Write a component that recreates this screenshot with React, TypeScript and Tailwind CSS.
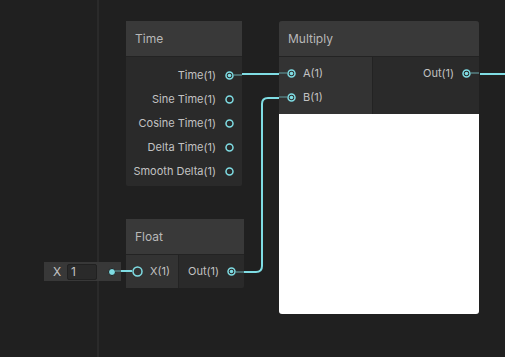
import React from "react";

const font = { fontFamily: "Inter, 'Noto Sans', sans-serif" };

function Port({ filled, big }: { filled?: boolean; big?: boolean }) {
  const s = big ? 11 : 9;
  return (
    <svg width={s} height={s} viewBox={`0 0 ${s} ${s}`} className="shrink-0">
      <circle cx={s / 2} cy={s / 2} r={s / 2 - 1} fill="none" stroke="#7fdde4" strokeWidth="1.5" />
      {filled && <circle cx={s / 2} cy={s / 2} r={1.8} fill="#7fdde4" />}
    </svg>
  );
}

export default function App() {
  const timeOuts = ["Time(1)", "Sine Time(1)", "Cosine Time(1)", "Delta Time(1)", "Smooth Delta(1)"];
  return (
    <div className="relative w-[505px] h-[357px] bg-[#202020] overflow-hidden text-[11px]" style={font}>
      {/* vertical guide line */}
      <div className="absolute left-[97px] top-0 w-[2px] h-full bg-[#2a2a2a]" />

      {/* wires */}
      <svg className="absolute left-0 top-0" width="505" height="357">
        <path d="M242 74 H279" stroke="#7fdde4" strokeWidth="2" fill="none" />
        <path d="M244 272 H256 Q262 272 262 266 V104 Q262 98 268 98 H279" stroke="#7fdde4" strokeWidth="2" fill="none" />
        <path d="M480 74 H505" stroke="#7fdde4" strokeWidth="2" fill="none" />
      </svg>

      {/* Time node */}
      <div className="absolute left-[126px] top-[21px] w-[116px] flex flex-col bg-[#2a2a2a] rounded-[2px]">
        <div className="h-[36px] bg-[#393939] flex items-center px-[9px] text-[12px] text-[#b8b8b8] border-b border-[#232323]">Time</div>
        <div className="flex flex-col pt-[6px] pb-[3px]">
          {timeOuts.map((t, i) => (
            <div key={t} className="h-[24px] flex items-center justify-end text-[#c2c2c2]">
              <span>{t}</span>
              <div className="w-[9px]" />
              <Port filled={i === 0} />
              <div className={`w-[8px] h-[2px] ${i === 0 ? "bg-[#4a6a6c]" : ""}`} />
            </div>
          ))}
        </div>
      </div>

      {/* Multiply node */}
      <div className="absolute left-[279px] top-[21px] w-[200px] h-[293px] flex flex-col bg-[#2a2a2a] rounded-[3px] overflow-hidden">
        <div className="h-[36px] bg-[#393939] flex items-center px-[9px] text-[12px] text-[#b8b8b8] border-b border-[#232323] shrink-0">Multiply</div>
        <div className="flex h-[57px] shrink-0">
          <div className="w-[94px] bg-[#333333] border-r border-[#232323] flex flex-col pt-[4px]">
            {["A(1)", "B(1)"].map((t) => (
              <div key={t} className="h-[24px] flex items-center text-[#c2c2c2]">
                <div className="w-[8px] h-[2px] bg-[#4a6a6c]" />
                <Port filled />
                <span className="ml-[7px]">{t}</span>
              </div>
            ))}
          </div>
          <div className="flex-1 flex flex-col pt-[4px]">
            <div className="h-[24px] flex items-center justify-end text-[#c2c2c2]">
              <span>Out(1)</span>
              <div className="w-[8px]" />
              <Port filled />
              <div className="w-[8px] h-[2px] bg-[#4a6a6c]" />
            </div>
          </div>
        </div>
        <div className="flex-1 bg-white" />
      </div>

      {/* X input */}
      <div className="absolute left-[44px] top-[262px] w-[77px] h-[19px] bg-[#383838] flex items-center text-[#c2c2c2] text-[12px]">
        <span className="ml-[9px] w-[14px]">X</span>
        <div className="w-[30px] h-[16px] bg-[#2a2a2a] border border-[#212121] rounded-[2px] flex items-center pl-[3px]">1</div>
        <div className="ml-[11px] w-[6px] h-[6px] rounded-full bg-[#7fdde4] border border-[#1e1e1e] box-content" />
      </div>

      {/* Float node */}
      <div className="absolute left-[126px] top-[219px] w-[118px] flex flex-col bg-[#2a2a2a] rounded-[2px]">
        <div className="h-[36px] bg-[#393939] flex items-center px-[9px] text-[12px] text-[#b8b8b8] border-b border-[#232323]">Float</div>
        <div className="flex h-[33px]">
          <div className="w-[53px] bg-[#333333] border-r border-[#232323] flex items-center text-[#c2c2c2]">
            <div className="w-[6px]" />
            <Port big />
            <span className="ml-[7px]">X(1)</span>
          </div>
          <div className="flex-1 flex items-center justify-end text-[#c2c2c2]">
            <span>Out(1)</span>
            <div className="w-[8px]" />
            <Port filled />
            <div className="w-[8px] h-[2px] bg-[#4a6a6c]" />
          </div>
        </div>
      </div>

      {/* X input wire, drawn over the field and node edge */}
      <svg className="absolute left-0 top-0 pointer-events-none" width="505" height="357">
        <path d="M115 271 H121" stroke="#4a6a6c" strokeWidth="2" fill="none" />
        <path d="M121 271 H132" stroke="#7fdde4" strokeWidth="2" fill="none" />
      </svg>
    </div>
  );
}
